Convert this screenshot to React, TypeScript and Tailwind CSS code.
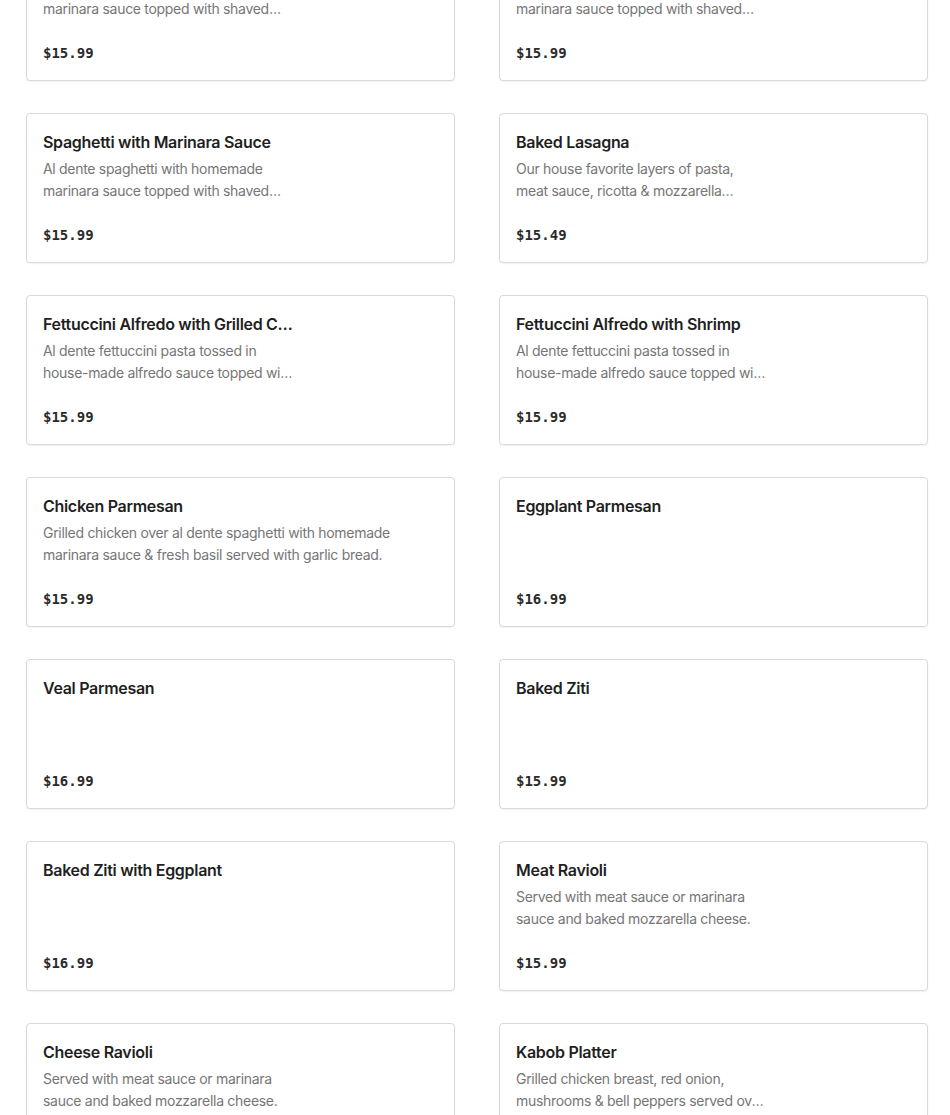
import React from "react";

interface MenuItem {
  name: string;
  description?: string;
  price: string;
  // items that carry a photo leave room for it on the right
  hasImage?: boolean;
}

const items: MenuItem[] = [
  {
    name: "Spaghetti with Meatballs",
    description:
      "Al dente spaghetti with homemade marinara sauce topped with shaved parmesan and meatballs.",
    price: "$15.99",
    hasImage: true,
  },
  {
    name: "Spaghetti with Meat Sauce",
    description:
      "Al dente spaghetti with homemade marinara sauce topped with shaved parmesan and meat sauce.",
    price: "$15.99",
    hasImage: true,
  },
  {
    name: "Spaghetti with Marinara Sauce",
    description:
      "Al dente spaghetti with homemade marinara sauce topped with shaved parmesan and fresh basil.",
    price: "$15.99",
    hasImage: true,
  },
  {
    name: "Baked Lasagna",
    description:
      "Our house favorite layers of pasta, meat sauce, ricotta & mozzarella cheese baked to perfection.",
    price: "$15.49",
    hasImage: true,
  },
  {
    name: "Fettuccini Alfredo with Grilled Chicken",
    description:
      "Al dente fettuccini pasta tossed in house-made alfredo sauce topped with grilled chicken.",
    price: "$15.99",
    hasImage: true,
  },
  {
    name: "Fettuccini Alfredo with Shrimp",
    description:
      "Al dente fettuccini pasta tossed in house-made alfredo sauce topped with shrimp.",
    price: "$15.99",
    hasImage: true,
  },
  {
    name: "Chicken Parmesan",
    description:
      "Grilled chicken over al dente spaghetti with homemade marinara sauce & fresh basil served with garlic bread.",
    price: "$15.99",
  },
  { name: "Eggplant Parmesan", price: "$16.99" },
  { name: "Veal Parmesan", price: "$16.99" },
  { name: "Baked Ziti", price: "$15.99" },
  { name: "Baked Ziti with Eggplant", price: "$16.99" },
  {
    name: "Meat Ravioli",
    description: "Served with meat sauce or marinara sauce and baked mozzarella cheese.",
    price: "$15.99",
    hasImage: true,
  },
  {
    name: "Cheese Ravioli",
    description: "Served with meat sauce or marinara sauce and baked mozzarella cheese.",
    price: "$15.99",
    hasImage: true,
  },
  {
    name: "Kabob Platter",
    description:
      "Grilled chicken breast, red onion, mushrooms & bell peppers served over rice with tzatziki.",
    price: "$17.99",
    hasImage: true,
  },
];

function ItemCard({ item }: { item: MenuItem }) {
  return (
    <div className="h-[150px] rounded-[4px] border border-[#d9d9d9] bg-white p-4 shadow-[0_1px_2px_rgba(0,0,0,0.06)] flex">
      <div className={item.hasImage ? "w-[252px] flex flex-col min-w-0" : "flex-1 flex flex-col min-w-0"}>
        <div className="truncate text-[16px] leading-[24px] font-semibold tracking-[-0.3px] text-[#1f1f1f]">
          {item.name}
        </div>
        {item.description && (
          <div className="mt-1 line-clamp-2 text-[14px] leading-[22px] tracking-[-0.3px] text-[#767676]">
            {item.description}
          </div>
        )}
        <div className="mt-auto text-[14px] leading-[22px] font-bold text-[#2a2a2a] font-['DejaVu_Sans_Mono',monospace]">
          {item.price}
        </div>
      </div>
    </div>
  );
}

export default function App() {
  return (
    <div className="min-h-screen bg-white overflow-hidden font-['Inter','Liberation_Sans',sans-serif]">
      <div className="-mt-[69px] pl-[26px] pr-[22px] grid grid-cols-2 gap-x-[44px] gap-y-[32px]">
        {items.map((item, i) => (
          <ItemCard key={i} item={item} />
        ))}
      </div>
    </div>
  );
}
